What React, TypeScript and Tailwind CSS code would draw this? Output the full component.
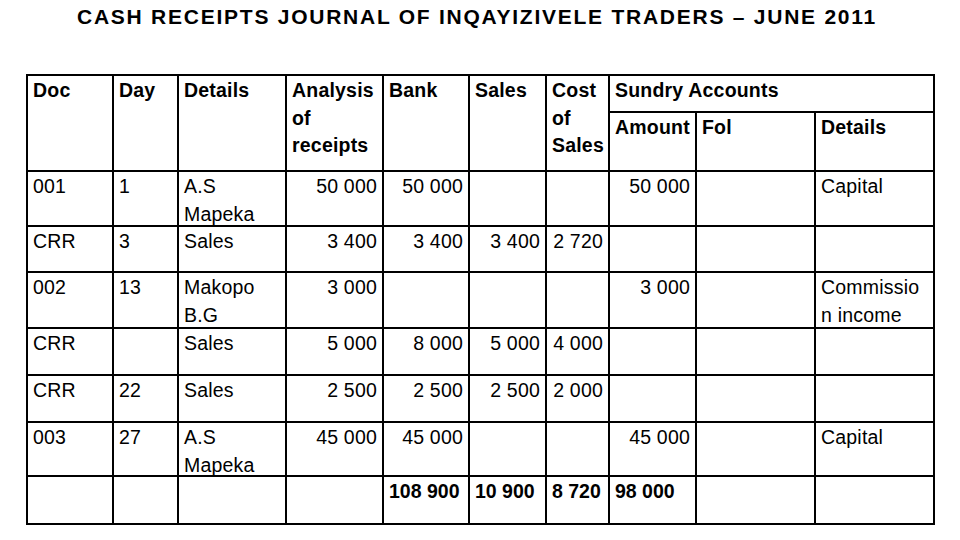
import React from "react";

type Align = "l" | "r";

const aligns: Align[] = ["l", "l", "l", "r", "r", "r", "r", "r", "l", "l"];

const rows: string[][] = [
  ["001", "1", "A.S\nMapeka", "50 000", "50 000", "", "", "50 000", "", "Capital"],
  ["CRR", "3", "Sales", "3 400", "3 400", "3 400", "2 720", "", "", ""],
  ["002", "13", "Makopo\nB.G", "3 000", "", "", "", "3 000", "", "Commissio\nn income"],
  ["CRR", "", "Sales", "5 000", "8 000", "5 000", "4 000", "", "", ""],
  ["CRR", "22", "Sales", "2 500", "2 500", "2 500", "2 000", "", "", ""],
  ["003", "27", "A.S\nMapeka", "45 000", "45 000", "", "", "45 000", "", "Capital"],
];

const totals = ["", "", "", "", "108 900", "10 900", "8 720", "98 000", "", ""];

function Lines({ text }: { text: string }) {
  const parts = text.split("\n");
  return (
    <>
      {parts.map((p, i) => (
        <React.Fragment key={i}>
          {p}
          {i < parts.length - 1 && <br />}
        </React.Fragment>
      ))}
    </>
  );
}

function Head({ children, className = "" }: { children: React.ReactNode; className?: string }) {
  return <div className={`bg-white pl-[5px] pt-[1px] font-bold ${className}`}>{children}</div>;
}

export default function App() {
  return (
    <div
      className="w-[960px] h-[540px] bg-white text-black overflow-hidden"
      style={{ fontFamily: '"Liberation Sans", Arial, sans-serif' }}
    >
      <div className="pt-[5px] pr-[6px] text-center text-[21px] leading-[24px] font-bold tracking-[1.75px]">
        CASH RECEIPTS JOURNAL OF INQAYIZIVELE TRADERS – JUNE 2011
      </div>

      <div className="ml-[26px] mt-[45px] w-fit border-2 border-black bg-black">
        <div className="grid gap-[2px] grid-cols-[84px_63px_106px_95px_84px_75px_61px_85px_117px_117px] grid-rows-[35px_57px_53px_44px_54px_45px_45px_52px_46px] text-[19.5px] leading-[27.5px] tracking-[0.2px]">
          <Head className="row-span-2">Doc</Head>
          <Head className="row-span-2">Day</Head>
          <Head className="row-span-2">Details</Head>
          <Head className="row-span-2">
            Analysis
            <br />
            of
            <br />
            receipts
          </Head>
          <Head className="row-span-2">Bank</Head>
          <Head className="row-span-2">Sales</Head>
          <Head className="row-span-2 pl-[4px]">
            Cost
            <br />
            of
            <br />
            Sales
          </Head>
          <Head className="col-span-3">Sundry Accounts</Head>
          <Head>Amount</Head>
          <Head>Fol</Head>
          <Head>Details</Head>

          {rows.map((r, ri) =>
            r.map((c, ci) => (
              <div
                key={`${ri}-${ci}`}
                className={`bg-white pt-[1px] whitespace-nowrap ${
                  aligns[ci] === "r" ? "text-right pr-[5px]" : "pl-[5px]"
                }`}
              >
                <Lines text={c} />
              </div>
            ))
          )}

          {totals.map((c, ci) => (
            <div key={`t-${ci}`} className="bg-white pt-[1px] pl-[5px] font-bold tracking-normal whitespace-nowrap">
              {c}
            </div>
          ))}
        </div>
      </div>
    </div>
  );
}
